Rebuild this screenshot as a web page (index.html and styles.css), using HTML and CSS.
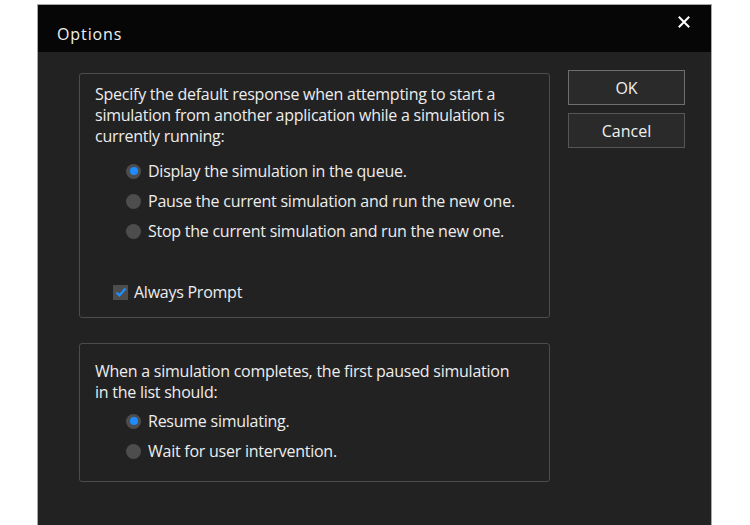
FILE: index.html
```html
<!DOCTYPE html>
<html>
<head>
<meta charset="utf-8">
<link rel="stylesheet" href="styles.css">
</head>
<body>
<div class="dialog">
  <div class="titlebar">
    <span class="title">Options</span>
    <svg class="close" width="12" height="12" viewBox="0 0 12 12"><path d="M1.5 1.5 L10.5 10.5 M10.5 1.5 L1.5 10.5" stroke="#ffffff" stroke-width="2" stroke-linecap="square"/></svg>
  </div>
  <div class="content">
    <div class="groups">
      <div class="group group-one">
        <p class="para">Specify the default response when attempting to start a simulation from another application while a simulation is currently running:</p>
        <div class="options first-options">
          <div class="row"><span class="radio checked"></span><span>Display the simulation in the queue.</span></div>
          <div class="row"><span class="radio"></span><span>Pause the current simulation and run the new one.</span></div>
          <div class="row"><span class="radio"></span><span>Stop the current simulation and run the new one.</span></div>
        </div>
        <div class="row check-row">
          <span class="checkbox"><svg width="14" height="14" viewBox="0 0 14 14"><path d="M2.5 7.5 L5.5 10.5 L11.5 3.5" fill="none" stroke="#1e8fff" stroke-width="2.2"/></svg></span>
          <span>Always Prompt</span>
        </div>
      </div>
      <div class="group group-two">
        <p class="para">When a simulation completes, the first paused simulation in the list should:</p>
        <div class="options second-options">
          <div class="row"><span class="radio checked"></span><span>Resume simulating.</span></div>
          <div class="row"><span class="radio"></span><span>Wait for user intervention.</span></div>
        </div>
      </div>
    </div>
    <div class="buttons">
      <div class="btn btn-default">OK</div>
      <div class="btn">Cancel</div>
    </div>
  </div>
</div>
</body>
</html>
```
FILE: styles.css
```css
html, body {
  margin: 0;
  padding: 0;
  background: #ffffff;
  height: 100%;
  overflow: hidden;
}
body {
  font-family: "Open Sans", "Noto Sans", sans-serif;
  color: #ededed;
}
.dialog {
  margin-left: 37px;
  margin-top: 4px;
  width: 673px;
  height: 540px;
  border: 1px solid #a8a8a8;
  border-bottom: none;
  background: #222222;
  display: flex;
  flex-direction: column;
}
.titlebar {
  height: 47px;
  background: #060606;
  display: flex;
  align-items: flex-start;
  justify-content: space-between;
  padding: 0 21px 0 19px;
  flex: none;
}
.title {
  font-size: 16px;
  line-height: 22px;
  margin-top: 18px;
  color: #f0f0f0;
  letter-spacing: 0.9px;
}
.close {
  margin-top: 11px;
}
.content {
  display: flex;
  padding: 21px 0 0 41px;
}
.groups {
  width: 471px;
  display: flex;
  flex-direction: column;
  gap: 25px;
}
.group {
  box-sizing: border-box;
  border: 1px solid #4c4c4c;
  border-radius: 3px;
  padding-left: 15px;
}
.group-one {
  height: 245px;
  padding-top: 10px;
}
.group-two {
  height: 139px;
  padding-top: 17px;
}
.para {
  margin: 0;
  font-size: 16px;
  line-height: 21px;
  width: 420px;
  letter-spacing: -0.25px;
}
.options {
  padding-left: 31px;
}
.first-options {
  margin-top: 9px;
}
.second-options {
  margin-top: 3px;
}
.row {
  display: flex;
  align-items: center;
  height: 30px;
  font-size: 16px;
  letter-spacing: -0.25px;
  gap: 7px;
}
.radio {
  width: 15px;
  height: 15px;
  border-radius: 50%;
  background: #4d4d4d;
  flex: none;
  display: flex;
  align-items: center;
  justify-content: center;
}
.radio.checked::after {
  content: "";
  width: 8px;
  height: 8px;
  border-radius: 50%;
  background: #1b8dff;
}
.check-row {
  margin-top: 31px;
  padding-left: 18px;
  gap: 6px;
}
.checkbox {
  width: 15px;
  height: 15px;
  background: #4d4d4d;
  display: flex;
  align-items: center;
  justify-content: center;
  flex: none;
}
.buttons {
  margin-left: 18px;
  margin-top: -3px;
  display: flex;
  flex-direction: column;
  gap: 8px;
}
.btn {
  box-sizing: border-box;
  width: 117px;
  height: 35px;
  border: 1px solid #565656;
  background: #2a2a2a;
  display: flex;
  align-items: center;
  justify-content: center;
  font-size: 16px;
  color: #f0f0f0;
}
.btn-default {
  border-color: #6e6e6e;
}
```
